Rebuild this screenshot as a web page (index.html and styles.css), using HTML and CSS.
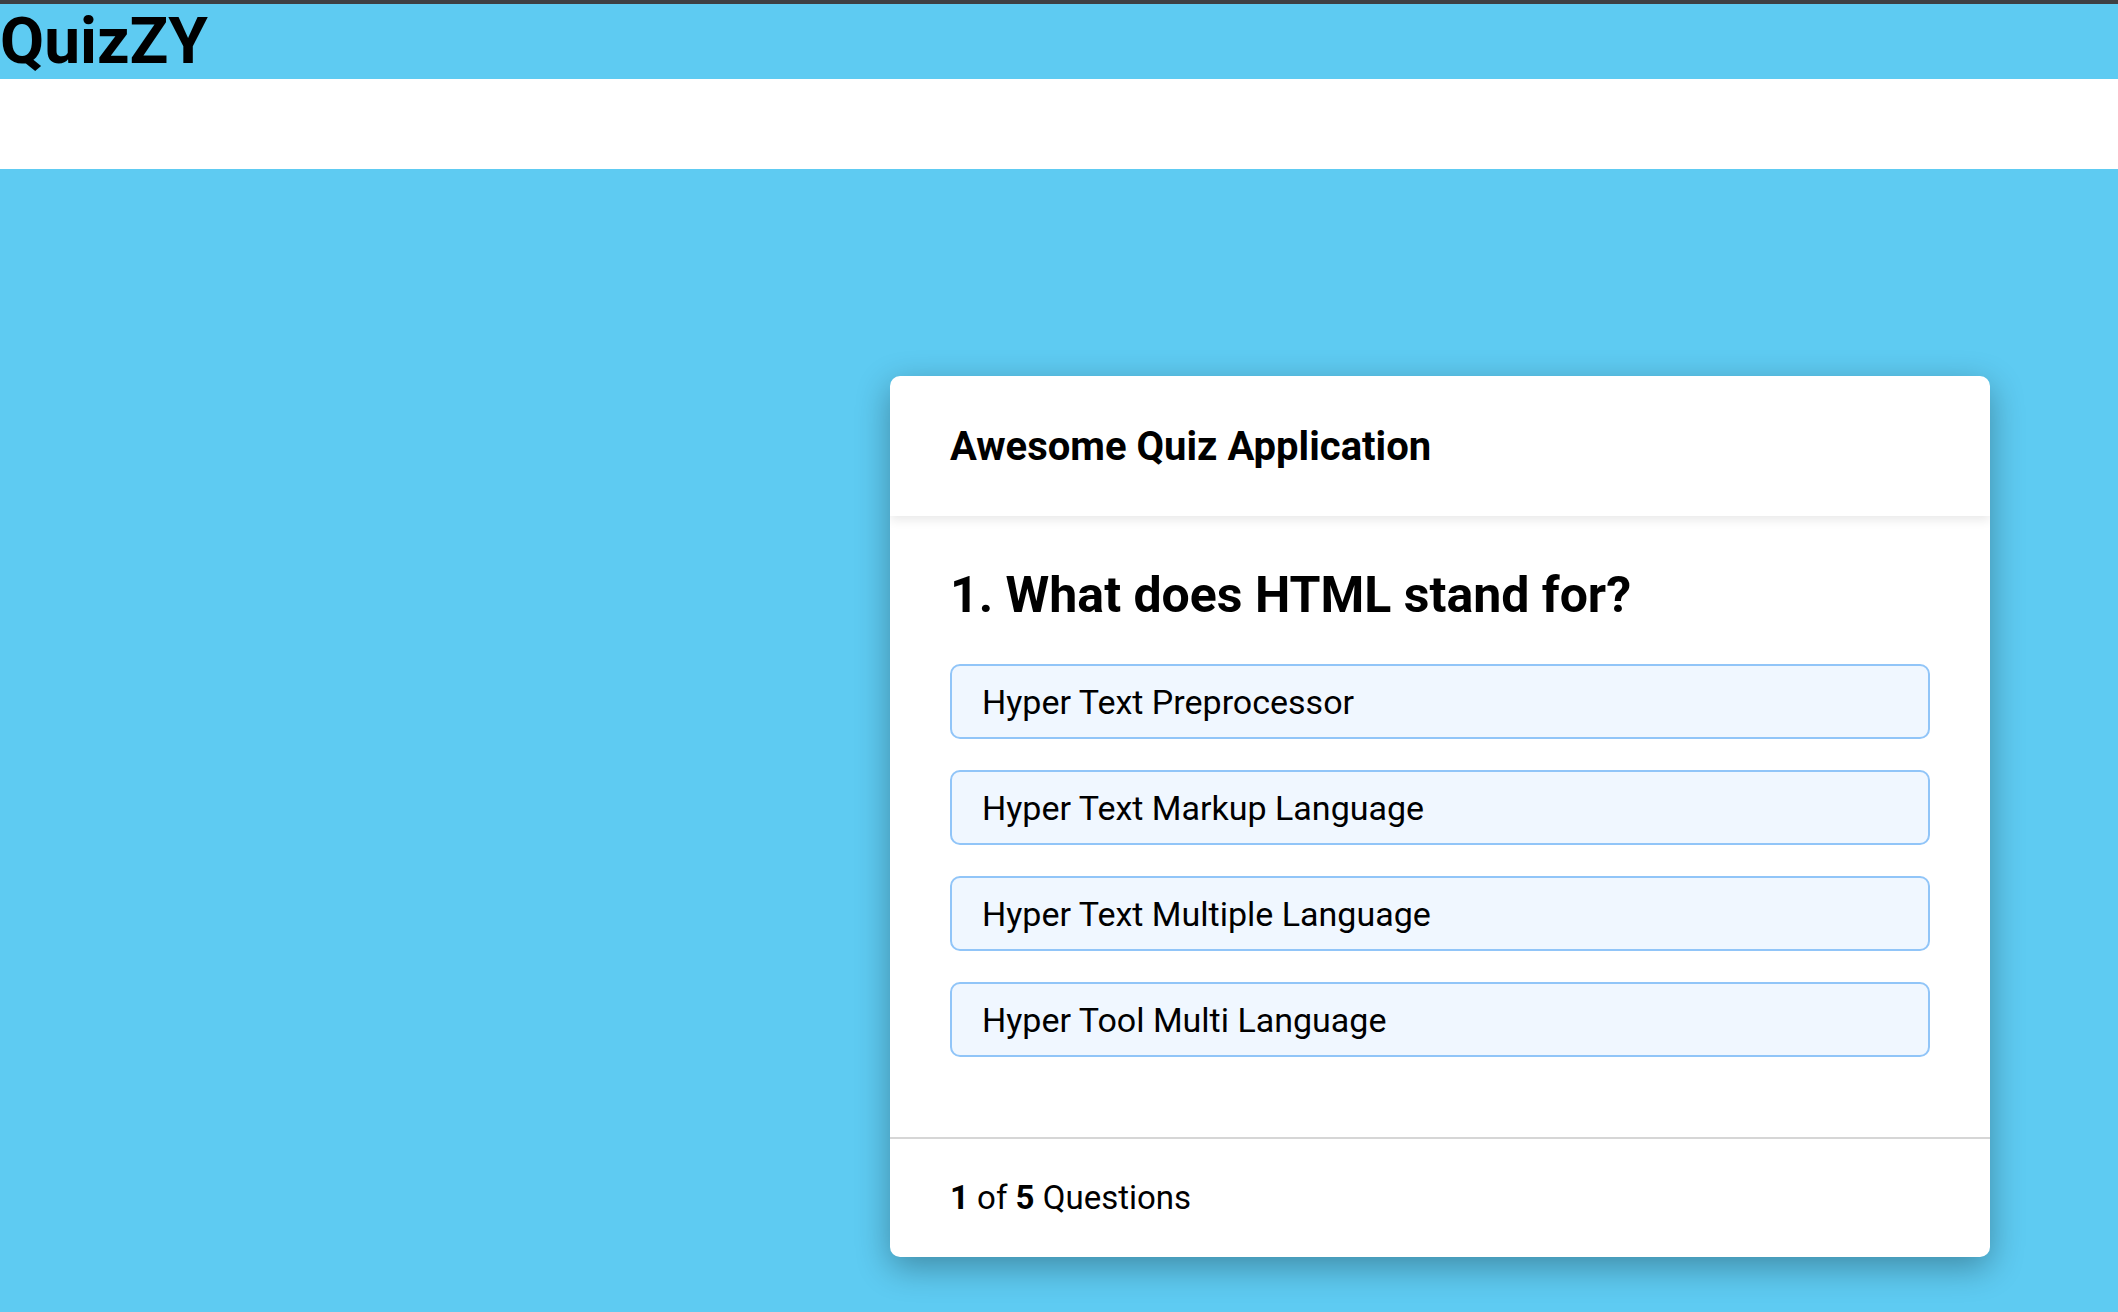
FILE: index.html
```html
<!DOCTYPE html>
<html lang="en">
<head>
<meta charset="utf-8">
<title>QuizZY</title>
<link rel="stylesheet" href="styles.css">
</head>
<body>
<header class="topbar">
  <h1 class="brand">QuizZY</h1>
</header>
<div class="subbar"></div>
<main class="stage">
  <section class="quiz-card">
    <div class="quiz-header">
      <h2 class="quiz-title">Awesome Quiz Application</h2>
    </div>
    <div class="quiz-body">
      <h3 class="question">1. What does HTML stand for?</h3>
      <ul class="options">
        <li class="option">Hyper Text Preprocessor</li>
        <li class="option">Hyper Text Markup Language</li>
        <li class="option">Hyper Text Multiple Language</li>
        <li class="option">Hyper Tool Multi Language</li>
      </ul>
    </div>
    <div class="quiz-footer">
      <span class="count"><b>1</b> of <b>5</b> Questions</span>
    </div>
  </section>
</main>
</body>
</html>
```
FILE: styles.css
```css
* { box-sizing: border-box; }

html, body {
  margin: 0;
  padding: 0;
}

body {
  font-family: Roboto, "Liberation Sans", Arial, sans-serif;
  color: #000;
  background: #5ecbf2;
  border-top: 4px solid #3e4043;
  min-height: 100vh;
}

.topbar {
  background: #5ecbf2;
}

.brand {
  margin: 0;
  font-size: 64px;
  font-weight: 700;
  line-height: 75px;
  height: 75px;
}

.subbar {
  background: #fff;
  height: 90px;
}

.stage {
  display: flex;
  justify-content: flex-end;
  padding: 207px 128px 60px 0;
}

.quiz-card {
  width: 1100px;
  background: #fff;
  border-radius: 10px;
  box-shadow: 0 10px 34px rgba(0, 0, 0, 0.32);
  overflow: hidden;
}

.quiz-header {
  height: 140px;
  display: flex;
  align-items: center;
  padding: 0 60px;
  position: relative;
  box-shadow: 0 4px 10px rgba(0, 0, 0, 0.09);
}

.quiz-title {
  margin: 0;
  font-size: 40px;
  font-weight: 700;
  line-height: 46px;
  padding-top: 2px;
}

.quiz-body {
  padding: 51px 60px 80px;
  border-bottom: 2px solid #d6d6d6;
}

.question {
  margin: 0 0 41px;
  font-size: 50px;
  font-weight: 700;
  line-height: 56px;
}

.options {
  list-style: none;
  margin: 0;
  padding: 0;
  display: flex;
  flex-direction: column;
  gap: 31px;
}

.option {
  background: #f0f7ff;
  border: 2px solid #91c5f8;
  border-radius: 10px;
  padding: 18px 30px 16px;
  font-size: 34px;
  line-height: 37px;
}

.quiz-footer {
  padding: 40px 60px 40px;
}

.count {
  font-size: 33px;
  line-height: 38px;
}

.count b {
  font-weight: 700;
}
```
